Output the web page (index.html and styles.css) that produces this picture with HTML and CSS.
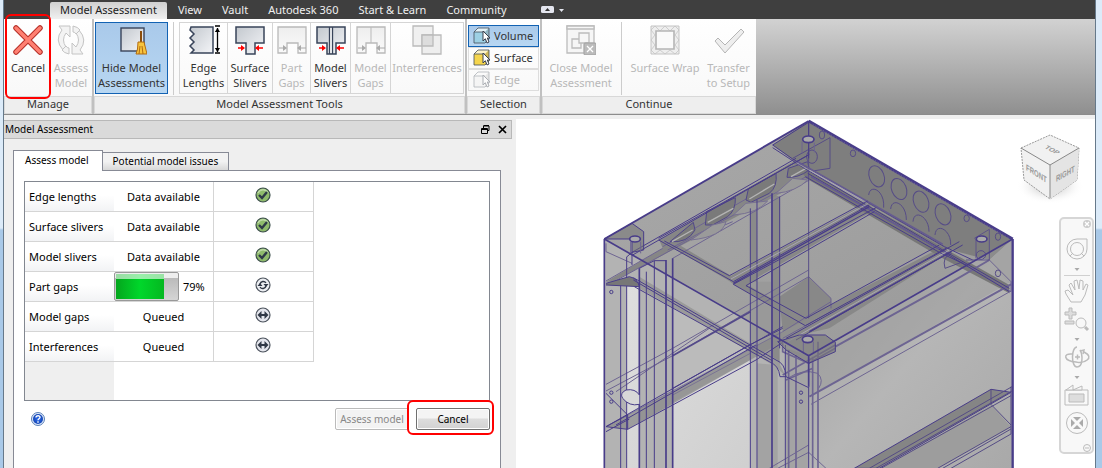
FILE: index.html
```html
<!DOCTYPE html>
<html lang="en">
<head>
<meta charset="utf-8">
<title>Model Assessment</title>
<link rel="stylesheet" href="styles.css">
</head>
<body>
<svg width="0" height="0" class="defs" aria-hidden="true">
  <defs>
    <linearGradient id="steel" x1="0" y1="0" x2="1" y2="1"><stop offset="0" stop-color="#c3c8ce"/><stop offset="1" stop-color="#f4f5f8"/></linearGradient>
    <linearGradient id="pale" x1="0" y1="0" x2="0" y2="1"><stop offset="0" stop-color="#eee"/><stop offset="1" stop-color="#fafafa"/></linearGradient>
    <radialGradient id="blue"><stop offset="0" stop-color="#2c6cf0"/><stop offset="1" stop-color="#1546b4"/></radialGradient>
    <symbol id="done" viewBox="0 0 16 16"><circle cx="8" cy="8" r="7" fill="#8fbb6c" stroke="#3a4c4a" stroke-width="1.2"/><path d="M3 6a5.5 5.5 0 0 1 10 0" fill="none" stroke="#bcd9a4" stroke-width="1.5"/><path d="M4 8l3 3 5-6" fill="none" stroke="#2f3a48" stroke-width="2.4"/></symbol>
    <symbol id="busy" viewBox="0 0 16 16"><circle cx="8" cy="8" r="7" fill="#eceef2" stroke="#4b525c" stroke-width="1.2"/><path d="M5 7a3.3 3.3 0 0 1 6-1M11 9a3.3 3.3 0 0 1-6 1" fill="none" stroke="#303846" stroke-width="1.4"/><path d="M2.5 9h5L5 6zM8.500 7h5L11 10z" fill="#303846"/></symbol>
    <symbol id="queued" viewBox="0 0 16 16"><circle cx="8" cy="8" r="7" fill="#e5e6ed" stroke="#4b525c" stroke-width="1.2"/><path d="M2.500 8L6.500 4v3h3V4l4 4-4 4V9h-3v3z" fill="#303846"/></symbol>
    <symbol id="cube" viewBox="0 0 18 18"><path d="M1 5L5 1h11v11l-4 4H1z" fill="currentColor"/><path d="M5 1h11l-4 4H1z" fill="#fff" fill-opacity=".7"/><path d="M16 1v11l-4 4V5z" fill="#777" fill-opacity=".3"/><path d="M1 5L5 1h11v11l-4 4H1zM1 5h11" fill="none" stroke="#444d5a" stroke-opacity=".8"/><path d="M10 4v10l2.300-2.300L14 16l2-1-1.700-4H17z" fill="#fff" stroke="#39414e"/></symbol>
  </defs>
</svg>
<div class="window">
  <nav class="tabs">
    <a class="tab tab-on" href="#ma">Model Assessment</a>
    <a class="tab" href="#view">View</a>
    <a class="tab" href="#vault">Vault</a>
    <a class="tab" href="#a360">Autodesk 360</a>
    <a class="tab" href="#start">Start &amp; Learn</a>
    <a class="tab" href="#community">Community</a>
    <button class="fold" aria-label="Minimize ribbon"><svg width="24" height="8" viewBox="0 0 24 8"><rect width="13" height="7" rx="1.500" fill="#e4e6ef"/><path d="M4 5l2.500-3L9 5z" fill="#333"/><path d="M18 3h5l-2.500 3z" fill="#e4e6ef"/></svg></button>
  </nav>
  <div class="ribbon">
    <section class="group manage">
      <div class="tools">
        <button class="tool cancel"><svg width="30" height="30" viewBox="0 0 30 30"><path d="M3 3l24 24M27 3L3 27" stroke="#b52f28" stroke-width="5.500" stroke-linecap="round"/><path d="M3 3l24 24M27 3L3 27" stroke="#ff8072" stroke-width="3.500" stroke-linecap="round"/></svg><span>Cancel</span></button>
        <button class="tool" disabled><svg width="30" height="30" viewBox="0 0 30 30" fill="#f3f3f3" stroke="#c4c4c4"><path d="M3 1h11v11l-4-4q-5 7 0 14l-3 3Q-2 15 6 5z"/><path d="M27 29H16V18l4 4q5-7 0-14l3-3q9 10 1 20z"/><path d="M17 1q5 1 7 4l-4 4q-1-2-3-2zM13 29q-5-1-7-4l4-4q1 2 3 2z"/></svg><span>Assess<br>Model</span></button>
      </div>
      <h2 class="caption">Manage</h2>
    </section>
    <section class="group assess">
      <div class="tools">
        <button class="tool hide on"><svg width="30" height="30" viewBox="0 0 30 30"><rect x="4" y="3" width="23" height="23" fill="url(#steel)" stroke="#39445a" stroke-width="1.400"/><path d="M24 6v13" stroke="#8a4d0b" stroke-width="2"/><path d="M21 17h6l3 12H19q2-4 2-12z" fill="#f8c43d" stroke="#b16b11"/><path d="M22 29l1-8M26 29l-1-8" stroke="#b16b11"/></svg><span>Hide Model<br>Assessments</span></button>
        <span class="rule"></span>
        <button class="tool lengths framed"><svg width="32" height="30" viewBox="0 0 32 30"><path d="M3 2h22v26H3l3-3-4-4 4-4-4-4 4-4-4-4z" fill="url(#steel)" stroke="#39445a" stroke-width="1.500"/><path d="M27 1h5M27 28h5M29.500 3v24" stroke="#000" stroke-width="1.300"/><path d="M26.800 7l2.700-4 2.500 4zM26.800 23l2.700 4 2.500-4z"/></svg><span>Edge<br>Lengths</span></button>
        <button class="tool surface framed"><svg width="30" height="30" viewBox="0 0 30 30"><path d="M1 2h28v16h-9v11h-9V18H1z" fill="url(#steel)" stroke="#39445a" stroke-width="1.500"/><path d="M3 23h5M22 23h6" stroke="red" stroke-width="1.500"/><path d="M6 20l4 3-4 3zM24 20l-4 3 4 3z" fill="red"/></svg><span>Surface<br>Slivers</span></button>
        <button class="tool part framed" disabled><svg width="30" height="30" viewBox="0 0 30 30"><path d="M1 2h28v26h-8V18H10v10H1z" fill="url(#pale)" stroke="#b9b9b9" stroke-width="1.300"/><path d="M2 23h5M24 23h5" stroke="#aaa"/><path d="M6 20l4 3-4 3zM24 20l-4 3 4 3z" fill="#aaa"/></svg><span>Part<br>Gaps</span></button>
        <button class="tool model framed"><svg width="30" height="30" viewBox="0 0 30 30"><path d="M1 2h28v16h-9v11h-9V18H1z" fill="url(#steel)" stroke="#39445a" stroke-width="1.500"/><path d="M13.500 2v27M16.500 2v27" stroke="#39445a" stroke-width="1.300"/><path d="M15 3v25" stroke="#fff"/><path d="M3 23h5M22 23h6" stroke="red" stroke-width="1.500"/><path d="M6 20l4 3-4 3zM24 20l-4 3 4 3z" fill="red"/></svg><span>Model<br>Slivers</span></button>
        <button class="tool gaps framed" disabled><svg width="30" height="30" viewBox="0 0 30 30"><path d="M1 2h28v26h-8V18H10v10H1z" fill="url(#pale)" stroke="#b9b9b9" stroke-width="1.300"/><path d="M15 2v16" stroke="#b9b9b9"/><path d="M2 23h5M24 23h5" stroke="#aaa"/><path d="M6 20l4 3-4 3zM24 20l-4 3 4 3z" fill="#aaa"/></svg><span>Model<br>Gaps</span></button>
        <button class="tool inter framed" disabled><svg width="30" height="30" viewBox="0 0 30 30" stroke="#bbb" stroke-width="1.300"><path d="M1 1h20v20H1z" fill="#f0f0f0"/><path d="M10 10h19v19H10z" fill="#eee"/><path d="M10 10h11v11H10z" fill="#ddd"/></svg><span>Interferences</span></button>
      </div>
      <h2 class="caption">Model Assessment Tools</h2>
    </section>
    <section class="group selection">
      <div class="tools picks">
        <button class="pick volume on"><svg width="18" height="18"><use href="#cube"/></svg>Volume</button>
        <button class="pick face"><svg width="18" height="18"><use href="#cube"/></svg>Surface</button>
        <button class="pick edge" disabled><svg width="18" height="18"><use href="#cube"/></svg>Edge</button>
      </div>
      <h2 class="caption">Selection</h2>
    </section>
    <section class="group continue">
      <div class="tools">
        <button class="tool close" disabled><svg width="30" height="30" viewBox="0 0 30 30" fill="#f6f6f6" stroke="#bcbcbc" stroke-width="1.300"><path d="M1 1h27v27H1z"/><path d="M1 1h27v3H1z"/><path d="M6 14h9v9H6z"/><path d="M13 8h10v10H13z"/><rect x="18" y="18" width="12" height="12" rx="2" fill="#bbb" stroke="#aaa"/><path d="M21 21l6 6M27 21l-6 6" stroke="#fff"/></svg><span>Close Model<br>Assessment</span></button>
        <span class="rule"></span>
        <button class="tool wrap" disabled><svg width="30" height="30" viewBox="0 0 30 30" fill="#eee" stroke="#c4c4c4"><path d="M1 1h28v28H1z"/><path d="M1 5l4-4 5 5 5-5 5 5 5-5 4 4-4 5 4 5-4 5 4 5-4 4-5-4-5 4-5-4-5 4-4-4 4-5-4-5 4-5z" fill="none" stroke-width=".8"/><path d="M6 6h18v18H6z" fill="#fafafa" stroke="#b5b5b5" stroke-width="1.600"/></svg><span>Surface Wrap</span></button>
        <button class="tool setup" disabled><svg width="30" height="30" viewBox="0 0 30 30"><path d="M1 16l3-3 7 7L27 4l3 3-19 21z" fill="#eee" stroke="#b5b5b5"/></svg><span>Transfer<br>to Setup</span></button>
      </div>
      <h2 class="caption">Continue</h2>
    </section>
    <div class="empty"></div>
    <span class="mark mark-ribbon"></span>
  </div>
  <main class="work">
    <section class="dock">
      <header class="dock-title"><h1>Model Assessment</h1>
        <button class="mini" aria-label="Float"><svg width="9" height="9" viewBox="0 0 9 9" fill="none" stroke="#000"><path d="M2.500 3V1H8v4.500H6.500M2.500.5H8"/><path d="M.5 3.500h6v5h-6zM.5 4.500h6"/></svg></button>
        <button class="mini" aria-label="Close"><svg width="9" height="9" viewBox="0 0 9 9"><path d="M1 1l7 7M8 1L1 8" stroke="#000" stroke-width="1.700"/></svg></button>
      </header>
      <div class="dock-body">
        <div class="sheets"><button class="sheet sheet-on">Assess model</button><button class="sheet">Potential model issues</button></div>
        <div class="pane">
          <div class="list">
            <table>
              <tr><th scope="row">Edge lengths</th><td>Data available</td><td><svg width="16" height="16"><use href="#done"/></svg></td></tr>
              <tr><th scope="row">Surface slivers</th><td>Data available</td><td><svg width="16" height="16"><use href="#done"/></svg></td></tr>
              <tr><th scope="row">Model slivers</th><td>Data available</td><td><svg width="16" height="16"><use href="#done"/></svg></td></tr>
              <tr><th scope="row">Part gaps</th><td><div class="run"><span class="bar"><span class="fill" style="width:79%"></span></span>79%</div></td><td><svg width="16" height="16"><use href="#busy"/></svg></td></tr>
              <tr><th scope="row">Model gaps</th><td>Queued</td><td><svg width="16" height="16"><use href="#queued"/></svg></td></tr>
              <tr><th scope="row">Interferences</th><td>Queued</td><td><svg width="16" height="16"><use href="#queued"/></svg></td></tr>
            </table>
            <div class="gutter"></div>
          </div>
          <div class="actions">
            <button class="help" aria-label="Help"><svg width="14" height="14" viewBox="0 0 14 14"><circle cx="7" cy="7" r="6.500" fill="#dce8fb" stroke="#5b7fb5"/><circle cx="7" cy="7" r="5" fill="url(#blue)"/><path d="M5 5.500C5 3 9.300 3.200 9 5.500 8.800 6.700 7 6.800 7 8.300M7 9.300v1.500" fill="none" stroke="#fff" stroke-width="1.400"/></svg></button>
            <button class="push" disabled>Assess model</button>
            <span class="ringed"><button class="push">Cancel</button><span class="mark mark-push"></span></span>
          </div>
        </div>
      </div>
    </section>
    <section class="view">
      <svg class="scene" viewBox="516 119 579 349" preserveAspectRatio="xMinYMin slice">
        <defs>
          <linearGradient id="topf" x1="0" y1="0" x2="1" y2="1"><stop offset="0" stop-color="#a9a9a9"/><stop offset="1" stop-color="#999"/></linearGradient>
          <linearGradient id="rightf" x1="0" y1="0" x2="1" y2="1"><stop offset="0" stop-color="#a0a0a0"/><stop offset=".5" stop-color="#b6b6b6"/><stop offset="1" stop-color="#a8a8a8"/></linearGradient>
          <linearGradient id="glass" x1="0" y1="0" x2="1" y2="1"><stop offset="0" stop-color="#dedede"/><stop offset="1" stop-color="#cfcfcf"/></linearGradient>
          <radialGradient id="shade"><stop offset="0" stop-color="#aaa"/><stop offset="1" stop-color="#fff" stop-opacity="0"/></radialGradient>
        </defs>
        <g transform="translate(596 115) scale(.333333)" fill="none" stroke="#483c89" stroke-width="3">
          <g stroke="none">
            <path d="M25 372L638 720V1100H25z" fill="#b3b3b3"/>
            <path d="M25 372L638 18L1250 372L638 722z" fill="url(#topf)"/>
            <path d="M638 722L1250 372V1100H638z" fill="url(#rightf)"/>
            <path d="M92 505L130 515V1100H92zM230 580L463 705V1100H230z" fill="url(#glass)"/>
            <path d="M230 565L463 700V735L230 862z" fill="#bbb"/>
            <path d="M463 500L526 500V740L463 700z" fill="#999"/>
            <path d="M526 235L551 245V750L526 735zM463 280L483 262V500H463z" fill="#8a8a8a"/>
            <path d="M483 745L545 750V1100H483z" fill="#a3a3a3"/>
            <path d="M570 700L638 722V1100H570z" fill="#a4a4a4"/>
            <path d="M638 18L1250 372L1180 435L1045 400L590 135L530 90z" fill="#7e7e7e"/>
            <path d="M1180 435L1250 372V520z" fill="#aeaeae"/>
            <path d="M638 722L1250 372L1245 500L720 800L638 840z" fill="#999" fill-opacity=".5"/>
            <path d="M190 375L600 135L640 190L450 290L230 405L50 500L30 500L200 400z" fill="#868686"/>
            <path d="M190 375L230 378L405 482L815 262L835 285L480 490L455 510L630 608L1040 395L1060 410L630 632L412 508L400 498z" fill="#878787"/>
            <path d="M590 135L640 170L1045 400L1240 510V535L1040 430L630 190z" fill="#777"/>
            <path d="M130 485L545 735L570 785L540 755L130 520z" fill="#9a9a9a"/>
            <path d="M30 935L560 650L638 600L705 550L700 590L560 680L95 943z" fill="#8a8a8a" fill-opacity=".75"/>
            <path d="M550 545L638 485L705 550V580L638 610L560 650z" fill="#888"/>
            <path d="M570 670L640 630L1040 408L1080 400L700 640z" fill="#888"/>
          </g>
          <!-- hidden edges, seen through the faces -->
          <g stroke="#6d6492">
            <path d="M30 808L230 700L638 465M30 828L230 722L638 485L705 550V580M60 830L340 640M560 650L705 560M560 670L705 590"/>
            <path d="M95 900L560 650M230 840L463 715" stroke-opacity=".7"/>
            <path d="M30 385V410L108 445M30 498L200 400M45 505L280 375L410 320M200 395L480 235M215 405L640 180M230 430L640 195"/>
            <path d="M560 685V710L638 745L718 700M560 780L718 690M570 795L650 760M600 720V1060M578 705V1060M650 725V1060M666 680V1060" stroke-width="5"/>
            <path d="M575 790Q620 760 665 775Q685 795 668 820M520 1060L638 990M545 1060L638 1012L690 1060"/>
            <path d="M718 695L1060 505L1180 435" stroke-width="6"/>
            <path d="M640 845L1245 508" stroke-width="6"/><path d="M645 868L1245 528M1180 435L1245 500V530L1110 450"/>
          </g>
          <path d="M230 722L463 590" stroke="#544a8a" stroke-width="5"/>
          <path d="M30 935L460 690L560 640M60 930L480 690M95 943L480 735L560 682M30 950L100 912M30 835L95 900V943L30 935L95 900M230 820L560 635"/>
          <!-- slots under the upper left rail -->
          <g fill="#7a7a7a" stroke="#50468a">
            <path d="M222 380L292 322L297 345Q275 385 222 380zM328 330L332 290L418 248Q420 285 395 305L350 330zM450 255L457 222L540 175Q545 215 520 235L465 262zM573 187L577 160L635 140L640 165Q605 190 573 187z"/>
            <path d="M285 375Q380 365 390 320L350 330zM412 300Q485 295 515 258L450 265zM540 235Q600 230 635 195L590 190z" fill="#9a9a9a" stroke="#777092"/>
            <path d="M228 380L290 345M335 322L412 280M460 252L535 207M585 185L630 160" stroke="#b4b4b4" stroke-width="4"/>
          </g>
          <!-- left posts -->
          <path d="M25 372V1060M130 460V1060M210 435V1060M230 430V1060M528 235V1060" stroke-width="5"/>
          <path d="M74 495V1060M92 425V1060M151 470V1060M175 437V1060M130 460L175 437H210M483 255V1060M463 280V1060M551 245V700M568 690V1060"/>
          <path d="M30 505L100 485Q125 490 130 515L30 510" fill="#777"/>
          <path d="M112 488L540 735Q568 745 570 785L552 785Q548 750 520 740L115 515M112 495L530 738"/>
          <path d="M130 840Q118 820 90 825Q70 835 80 850Q100 875 130 868" fill="#d8d8d8"/>
          <!-- far wall and perforations -->
          <g stroke="#564c87">
            <path d="M702 68V160L650 168M590 130L702 68M638 18V610"/>
            <ellipse cx="842" cy="184" rx="22" ry="33" transform="rotate(-22 842 184)"/><ellipse cx="909" cy="222" rx="22" ry="33" transform="rotate(-22 909 222)"/><ellipse cx="975" cy="260" rx="22" ry="33" transform="rotate(-22 975 260)"/><ellipse cx="1041" cy="298" rx="22" ry="33" transform="rotate(-22 1041 298)"/>
            <path d="M818 240C822 205 867 225 863 278M884 282C887 245 932 265 931 315M951 320C954 280 1000 305 999 350M1017 360C1020 320 1067 345 1064 390M1047 460Q1037 425 1067 415M1047 460L1102 440"/>
            <ellipse cx="678" cy="60" rx="8" ry="12"/><ellipse cx="771" cy="115" rx="8" ry="10"/><ellipse cx="1112" cy="310" rx="8" ry="10"/><ellipse cx="1206" cy="365" rx="8" ry="11"/><ellipse cx="1206" cy="475" rx="8" ry="10"/><ellipse cx="648" cy="125" rx="16" ry="20"/><ellipse cx="1155" cy="420" rx="14" ry="13"/>
          </g>
          <!-- top rails -->
          <path d="M530 90L590 132L1045 395L1130 435M530 98L625 160L1040 405L1240 520M628 185L1030 412L1110 450M635 175L1045 412L1240 530"/>
          <path d="M605 140L1040 388M645 185L1030 402" stroke="#655b90" stroke-width="5"/>
          <path d="M600 143L812 262M640 165L800 256" stroke="#aaa8b5" stroke-width="2"/>
          <path d="M108 412L600 130M110 420L640 118M188 370L638 120M188 375L412 500L820 270M205 378L400 482L815 258M412 508L840 278M412 508L628 632L1050 400M450 512L630 610L1030 390M450 512L835 290M570 670L1090 380M600 675L1100 390"/>
          <path d="M405 492L815 266M575 680L1060 405" stroke="#b8b5c8" stroke-width="2"/>
          <path d="M412 505L820 275M640 650L1065 410" stroke-width="4"/>
          <!-- corner gussets -->
          <path d="M530 90L638 22V130" fill="none"/>
          <path d="M25 372L108 325L143 350V405L108 412V372z" fill="#6f6f6f" fill-opacity=".5"/><path d="M93 425L108 412V450"/>
          <path d="M545 680L610 660H688L718 682V710L638 745L570 705z" fill="#777" fill-opacity=".55"/>
          <path d="M1135 370L1180 343V435H1110M1140 372V430" stroke="#5d5389"/>
          <path d="M618 80V115M655 83V112M104 380V420M134 380V415M622 680V715M652 680V715" stroke="#6d6492"/>
          <!-- outer edges -->
          <path d="M25 372L638 18" stroke-width="6"/>
          <path d="M638 18L1250 372" stroke-width="9"/><path d="M650 28L1240 370" stroke="#79739c" stroke-width="2" stroke-dasharray="4 5"/>
          <path d="M25 372L638 722L1250 372M638 722V815" stroke-width="5"/><path d="M638 815V1060M570 785L638 818"/>
          <path d="M1250 372V1060" stroke-width="7"/>
          <!-- lower right channel -->
          <path d="M775 1060L1185 823L1245 832L850 1060z" fill="#858585"/><path d="M1185 870L1245 935L1025 1060H855z" fill="#9d9d9d" stroke="none"/>
          <path d="M820 1060L1248 815M840 1060L1248 828M855 1060L1245 842M1185 823V868L1245 930M1025 1060L1245 935M1040 1060L1245 942M1065 1060L1245 957M1245 815V957" stroke="#544b85"/>
          <!-- bolts and pin holes -->
          <g fill="#aaa" stroke-width="5"><ellipse cx="637" cy="73" rx="17" ry="10"/><ellipse cx="117" cy="372" rx="16" ry="9"/><ellipse cx="1157" cy="372" rx="16" ry="9"/><ellipse cx="635" cy="673" rx="16" ry="10"/></g>
          <g><circle cx="46" cy="531" r="5"/><circle cx="46" cy="833" r="5"/><circle cx="46" cy="860" r="5"/><circle cx="615" cy="833" r="5"/><circle cx="615" cy="860" r="5"/></g>
        </g>
      </svg>
      <svg class="compass" width="76" height="76" viewBox="0 0 76 76" role="img" aria-label="View cube">
        <ellipse cx="38" cy="55" rx="34" ry="18" fill="url(#shade)"/>
        <path d="M9 17L38 4L67 17L65 49L38 68L12 49z" fill="#f1f1f1" stroke="#999" stroke-dasharray="2 1"/>
        <path d="M38 34L67 17L65 49L38 68z" fill="#e4e4e4"/><path d="M9 17L38 34L67 17M38 34V67" fill="none" stroke="#888"/>
        <text class="cube-text" transform="matrix(.75 .48 0 1.100 14 39)">FRONT</text><text class="cube-text" transform="matrix(.75 -.43 0 1.100 44 51)">RIGHT</text><text class="cube-text" transform="matrix(.8 .4 -.65 .5 32 17)">TOP</text>
      </svg>
      <svg class="navbar" width="36" height="238" viewBox="0 0 36 238" fill="#f8f8f8" stroke="#bbb" role="toolbar" aria-label="Navigation bar">
        <rect x="1" y="1" width="33" height="235" rx="4" stroke="#d6d6d6" stroke-width="2"/>
        <circle cx="28" cy="7" r="4" fill="#ccc" stroke="none"/><path d="M26 5l4 4M30 5l-4 4" stroke="#fff" stroke-width="1.300"/>
        <path d="M18 22h10v10a10 10 0 1 1-10-10z"/><circle cx="18" cy="32" r="6.500"/><path d="M11 39l3-3M25 39l-3-3"/>
        <path d="M15.500 51h5L18 54zM15.500 121h5L18 124zM15.500 159h5L18 162z" fill="#aaa" stroke="none"/><path d="M5 58.500h26" stroke="#d0d0d0"/>
        <path d="M12 85L7 77l-1-3 3-1 5 5-4-10 2-2 4 7-1-9 3-1 2 9 1-9 3 1v9l3-6 2 1-3 10-4 7z"/>
        <path d="M10 91h3v4h4v3h-4v4h-3v-4H6v-3h4zM6 104h9v3H6z" fill="#ddd"/><circle cx="22" cy="106" r="5"/><path d="M26 110l3 3" stroke-width="3"/>
        <g fill="none" stroke-width="1.500"><path d="M25 135C37 141 24 147 17 145C4 144 4 136 13 137"/><path d="M18 130c-6 0-6 20 0 20s6-12 3-17"/><path d="M16 140h5M18.500 137.500v5M21 134l4-1-1 4"/></g>
        <path d="M6 173h23v15H6z"/><path d="M10 177h15v8H10z" fill="#ddd"/><path d="M7 173l7-5v5zM14 173l9-4v4z"/>
        <circle cx="18" cy="206" r="10.500"/><path d="M12 202l4 4-4 4zM24 202l-4 4 4 4zM14 200h8l-4 4zM14 212h8l-4-4z" fill="#aaa" stroke="none"/>
        <circle cx="28" cy="231" r="3.500"/><path d="M26 231h4"/>
      </svg>
    </section>
  </main>
</div>
</body>
</html>
```
FILE: styles.css
```css
* { box-sizing: border-box; }
body { margin: 0; height: 100vh; overflow: hidden; font: 11px/15px "Noto Sans", "Open Sans", sans-serif; color: #000; background: linear-gradient(#dcebf9 0 228px, #a9c9e8 230px); }
.defs { position: absolute; }
h1, h2 { margin: 0; font: inherit; }
button { margin: 0; padding: 0; border: 0; background: none; font: inherit; color: inherit; }
svg { display: block; flex: none; }
.window { height: 100vh; margin: 0 6px 0 3px; border: solid #66798a; border-width: 0 1px; background: #efefef; display: flex; flex-direction: column; }
.tabs { display: flex; align-items: center; height: 19px; padding-left: 46px; background: #3f3f3f; flex: none; }
.tab { color: #f0f0f0; text-decoration: none; padding: 2px 10px; height: 19px; white-space: nowrap; }
.tab-on { margin-top: 4px; padding: 0 10px 2px; line-height: 15px; color: #222; background: linear-gradient(#d0d0d0, #f4f4f4); border-radius: 2px 2px 0 0; margin-right: 1px; }
.fold { margin-left: 24px; }

.ribbon { position: relative; display: flex; height: 96px; flex: none; border-bottom: 1px solid #8c8c8c; background: #fff; color: #333; }
.group { display: flex; flex-direction: column; flex: none; border-right: 2px solid #c0c0c0; background: linear-gradient(#fff, #f7f7f7); }
.manage { width: 90px; }
.assess { width: 373px; }
.selection { width: 75px; }
.continue { width: 214px; border-right: 0; }
.tools { display: flex; flex: 1; padding: 3px 1px 1px; }
.caption { height: 18px; border: 1px solid #d8d8d8; background: #eee; text-align: center; line-height: 14px; }
.tool { display: flex; flex-direction: column; align-items: center; gap: 5px; padding-top: 3px; height: 72px; white-space: nowrap; flex: none; }
.tool:disabled, .pick:disabled { color: #b8b8b8; }
.manage .tool { width: 40px; }
.manage .cancel { width: 46px; }
.hide { width: 73px; }
.on { background: linear-gradient(#a9c9ea, #b8d7f2); outline: 1px solid #1262b3; outline-offset: -1px; }
.rule { width: 1px; margin: 0 5px; background: #ccc; }
.framed { border: 1px solid #d5d5d5; border-right: 0; padding-top: 2px; }
.framed:last-child { border-right: 1px solid #d5d5d5; }
.lengths { width: 48px; }
.surface { width: 45px; }
.part { width: 38px; }
.model, .gaps { width: 40px; }
.inter { width: 74px; }
.picks { flex-direction: column; padding: 6px 1px 3px; }
.pick { display: flex; align-items: center; gap: 3px; height: 22px; padding: 0 0 1px 4px; border: 1px solid #ddd; }
.pick svg { color: #f5d54d; }
.volume svg { color: #9dd0e4; }
.edge svg { color: #eee; opacity: .4; }
.close { width: 76px; }
.continue .rule { margin: 0 4px 0 2px; }
.wrap { width: 78px; }
.setup { flex: 1; padding-right: 2px; }
.empty { flex: 1; background: linear-gradient(#d2d2d2, #8f8f8f); }
.mark { position: absolute; border: 2px solid #f00; border-radius: 6px; pointer-events: none; }
.mark-ribbon { left: 1px; top: -5px; width: 46px; height: 85px; }

.work { display: flex; flex: 1; min-height: 0; padding-top: 4px; }
.dock { display: flex; flex-direction: column; width: 512px; flex: none; padding-top: 1px; }
.dock-title { display: flex; align-items: center; gap: 8px; height: 19px; margin-right: 4px; padding: 0 4px 0 1px; border: 1px solid #b8b8b8; border-left: 0; background: #dadada; }
.dock-title h1 { flex: 1; font-size: 10px; }
.dock-body { display: flex; flex-direction: column; flex: 1; padding: 11px 15px 0 9px; }
.sheets { display: flex; align-items: flex-end; }
.sheet { height: 18px; padding: 0 10px; border: 1px solid #878a95; border-bottom: 0; border-left: 0; background: linear-gradient(#f2f2f2 50%, #d8d8d8); font-size: 10px; }
.sheet-on { height: 21px; margin-bottom: -1px; padding: 0 13px 1px 11px; border-left: 1px solid #878a95; background: #fff; z-index: 1; }
.pane { flex: 1; padding: 10px; border: 1px solid #878a95; border-bottom: 0; background: #fff; }
.list { display: flex; flex-direction: column; height: 220px; border: 1px solid #828790; }
table { width: 289px; border-collapse: separate; border-spacing: 0; table-layout: fixed; }
th, td { height: 30px; padding: 0; font-weight: 400; text-align: center; border: solid #d5d5d5; border-width: 0 1px 1px 0; }
th { width: 89px; padding-left: 4px; text-align: left; white-space: nowrap; border-right: 0; background: linear-gradient(#fff 45%, #f2f3f5); }
td svg { margin: 0 auto 4px; }
td:last-child { padding-right: 2px; }
.gutter { flex: 1; width: 89px; background: #efefef; }
.run { display: flex; align-items: center; gap: 4px; height: 29px; }
.bar { width: 65px; height: 29px; padding: 1px; border: 1px solid #999; border-radius: 2px; background: linear-gradient(#eee 18%, #bbb 20%, #d5d5d5); }
.fill { display: block; height: 100%; background: linear-gradient(#fff9 0 18%, #fff0 20%), linear-gradient(90deg, #04a61d, #00d72b 50%, #04b820); }
.actions { display: flex; align-items: center; height: 36px; padding-left: 7px; }
.help { margin-right: auto; }
.push { width: 74px; height: 22px; border: 1px solid #707070; border-radius: 2px; background: linear-gradient(#f4f4f4 45%, #ddd 50%, #d2d2d2); box-shadow: inset 0 0 0 1px #fff; white-space: nowrap; font-size: 10px; }
.push:disabled { color: #888; border-color: #bbb; background: #f3f3f3; }
.ringed { position: relative; margin-left: 7px; }
.mark-push { left: -9px; top: -8px; width: 87px; height: 35px; }

.view { position: relative; flex: 1; min-width: 0; background: #fff; overflow: hidden; }
.scene { width: 100%; height: 100%; }
.compass { position: absolute; top: 12px; right: 7px; }
.navbar { position: absolute; top: 98px; right: 0; }
.cube-text { font: 700 8px "Liberation Sans", sans-serif; fill: #999; }
```
